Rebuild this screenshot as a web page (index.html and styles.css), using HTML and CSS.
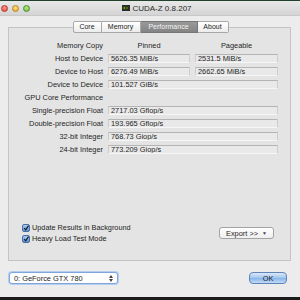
FILE: index.html
```html
<!DOCTYPE html>
<html lang="en">
<head>
  <meta charset="UTF-8">
  <title>CUDA-Z</title>
  <link rel="stylesheet" href="styles.css">
</head>
<body>
  <div class="window">
    <div class="titlebar">
      <div class="lights">
        <span class="light red"></span>
        <span class="light yellow"></span>
        <span class="light green"></span>
      </div>
      <div class="title">
        <svg class="appicon" width="8" height="6" viewBox="0 0 8 6">
          <rect width="8" height="6" fill="#2b2b2b"/>
          <path d="M1 3 Q3 0.5 6 3 Q3 5.5 1 3Z" fill="#76b900"/>
          <circle cx="3.6" cy="3" r="1" fill="#2b2b2b"/>
        </svg>
        CUDA-Z 0.8.207
      </div>
      <div></div>
    </div>

    <div class="tabs">
      <span class="tab">Core</span>
      <span class="tab">Memory</span>
      <span class="tab active">Performance</span>
      <span class="tab">About</span>
    </div>

    <div class="pane">
      <div class="grid">
        <div class="label">Memory Copy</div>
        <div class="head">Pinned</div>
        <div class="head">Pageable</div>

        <div class="label">Host to Device</div>
        <div class="field">5626.35 MiB/s</div>
        <div class="field">2531.5 MiB/s</div>

        <div class="label">Device to Host</div>
        <div class="field">6276.49 MiB/s</div>
        <div class="field">2662.65 MiB/s</div>

        <div class="label">Device to Device</div>
        <div class="field wide">101.527 GiB/s</div>

        <div class="label">GPU Core Performance</div>
        <div></div>
        <div></div>

        <div class="label">Single-precision Float</div>
        <div class="field wide">2717.03 Gflop/s</div>

        <div class="label">Double-precision Float</div>
        <div class="field wide">193.965 Gflop/s</div>

        <div class="label">32-bit Integer</div>
        <div class="field wide">768.73 Giop/s</div>

        <div class="label">24-bit Integer</div>
        <div class="field wide">773.209 Giop/s</div>
      </div>

      <div class="spacer"></div>

      <div class="pane-footer">
        <div class="checks">
          <label class="check"><span class="box"><svg width="8" height="8" viewBox="0 0 8 8"><path d="M1.5 4.2 L3.3 6.2 L6.8 1" fill="none" stroke="#1a1a1a" stroke-width="1.4"/></svg></span>Update Results in Background</label>
          <label class="check"><span class="box"><svg width="8" height="8" viewBox="0 0 8 8"><path d="M1.5 4.2 L3.3 6.2 L6.8 1" fill="none" stroke="#1a1a1a" stroke-width="1.4"/></svg></span>Heavy Load Test Mode</label>
        </div>
        <div class="btn export">Export &gt;&gt; <span class="tri">▼</span></div>
      </div>
    </div>

    <div class="bottom">
      <div class="combo">
        <span>0: GeForce GTX 780</span>
        <svg width="4" height="7" viewBox="0 0 4 7"><path d="M0 3 L2 0 L4 3Z M0 4 L2 7 L4 4Z" fill="#444"/></svg>
      </div>
      <div class="btn ok">OK</div>
    </div>
  </div>
</body>
</html>
```

FILE: styles.css
```css
body {
  margin: 0;
  width: 300px;
  height: 300px;
  background: #1c1c1c;
  font-family: "Liberation Sans", Arial, sans-serif;
  color: #1e1e1e;
  overflow: hidden;
}

.window {
  height: 297px;
  box-sizing: border-box;
  display: flex;
  flex-direction: column;
  background: #ececec;
  border-top: 1px solid #22412d;
}

/* barre de titre */
.titlebar {
  height: 14px;
  flex: none;
  display: grid;
  grid-template-columns: 1fr auto 1fr;
  align-items: center;
  background: linear-gradient(#e8e8e8, #d4d4d4);
  border-bottom: 1px solid #c8c8c8;
}

.lights {
  display: flex;
  gap: 4px;
  padding-left: 1px;
}

.light {
  width: 7px;
  height: 7px;
  border-radius: 50%;
  box-sizing: border-box;
}

.red { background: radial-gradient(circle at 50% 35%, #ff9a8f, #e0453a); border: 1px solid #b9372d; }
.yellow { background: radial-gradient(circle at 50% 35%, #ffe08a, #e0a525); border: 1px solid #b98420; }
.green { background: radial-gradient(circle at 50% 35%, #b9ec8c, #62b63a); border: 1px solid #4b9030; }

.title {
  font-size: 8px;
  color: #2a2a2a;
  display: flex;
  align-items: center;
  gap: 2px;
  margin-left: 14px;
}

/* onglets */
.tabs {
  display: flex;
  justify-content: center;
  margin-top: 5px;
  margin-bottom: -6px;
  position: relative;
  z-index: 1;
  padding-left: 1px;
}

.tab {
  height: 12px;
  box-sizing: border-box;
  font-size: 7px;
  line-height: 10px;
  padding: 0 5px;
  background: linear-gradient(#ffffff, #ececec);
  border: 1px solid #a8a8a8;
  border-left: none;
  text-align: center;
}

.tab:first-child {
  border-left: 1px solid #a8a8a8;
  border-radius: 2px 0 0 2px;
  width: 29px;
}

.tab:nth-child(2) { width: 39px; }
.tab:nth-child(3) { width: 57px; }

.tab:last-child {
  border-radius: 0 2px 2px 0;
  width: 31px;
}

.tab.active {
  background: linear-gradient(#9a9a9a, #838383);
  color: #f4f4f4;
  border-color: #777;
}

/* panneau */
.pane {
  margin: 0 9px 0 8px;
  height: 234px;
  box-sizing: border-box;
  background: #e4e4e4;
  border: 1px solid #c4c4c4;
  display: flex;
  flex-direction: column;
  padding-top: 11px;
}

.grid {
  display: grid;
  grid-template-columns: 94px 82px 83px;
  grid-auto-rows: 13px;
  column-gap: 5px;
  align-items: center;
  font-size: 7.4px;
}

.label {
  text-align: right;
}

.head {
  text-align: center;
}

.field {
  height: 9px;
  box-sizing: border-box;
  border: 1px solid #cdcdcd;
  border-top-color: #b4b4b4;
  border-bottom-color: #f6f6f6;
  background: #e9e9e9;
  line-height: 7px;
  padding-left: 2px;
  white-space: nowrap;
  overflow: hidden;
}

.field.wide {
  grid-column: span 2;
}

.spacer {
  flex: 1;
}

.pane-footer {
  display: flex;
  justify-content: space-between;
  align-items: center;
  padding: 0 16px 16px 13px;
}

.checks {
  display: flex;
  flex-direction: column;
}

.check {
  display: flex;
  align-items: center;
  gap: 2px;
  height: 11px;
  font-size: 7.3px;
}

.box {
  width: 8px;
  height: 8px;
  box-sizing: border-box;
  border: 1px solid #4c6d9e;
  border-radius: 2px;
  background: linear-gradient(#a9cdf5, #4f8fdb);
  display: flex;
}

.box svg {
  margin: -1px 0 0 -0.5px;
}

.btn {
  box-sizing: border-box;
  font-size: 7.4px;
  border-radius: 3px;
  display: flex;
  align-items: center;
  justify-content: center;
}

.export {
  width: 55px;
  height: 12px;
  background: linear-gradient(#ffffff, #efefef);
  border: 1px solid #a3a3a3;
  gap: 4px;
}

.tri {
  font-size: 5px;
  color: #444;
}

/* bas de fenêtre */
.bottom {
  display: flex;
  justify-content: space-between;
  align-items: flex-start;
  margin-top: 11px;
  padding: 0 13px 0 9px;
}

.combo {
  width: 109px;
  height: 12px;
  box-sizing: border-box;
  background: #fff;
  border: 1px solid #7ea6dc;
  box-shadow: 0 0 0 1px #b5cdee;
  border-radius: 3px;
  display: flex;
  justify-content: space-between;
  align-items: center;
  padding: 0 4px 0 4px;
  font-size: 7.4px;
}

.ok {
  width: 38px;
  height: 12px;
  border: 1px solid #5f82b8;
  border-radius: 4px;
  background: linear-gradient(#dceaf9, #9fc4ee 50%, #86b4ea 51%, #c2dbf6);
}
```
